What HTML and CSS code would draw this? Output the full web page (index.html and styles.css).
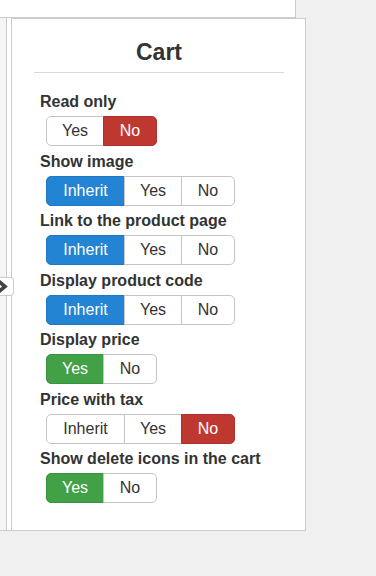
FILE: index.html
```html
<!DOCTYPE html>
<html lang="en">
  <head>
    <meta charset="UTF-8" />
    <meta name="viewport" content="width=device-width, initial-scale=1.0" />
    <title>Cart</title>
    <link rel="stylesheet" href="styles.css">
  </head>
  <body>
    <div class="top"></div>
    <div class="layout">
      <div class="side"></div>
      <div class="spacer"></div>
      <div class="panel">
        <h3 class="title">Cart</h3>
        <div class="field">
          <div class="label">Read only</div>
          <div class="group">
            <span class="btn yes">Yes</span>
            <span class="btn no danger">No</span>
          </div>
        </div>
        <div class="field">
          <div class="label">Show image</div>
          <div class="group">
            <span class="btn inherit primary">Inherit</span>
            <span class="btn yes">Yes</span>
            <span class="btn no">No</span>
          </div>
        </div>
        <div class="field">
          <div class="label">Link to the product page</div>
          <div class="group">
            <span class="btn inherit primary">Inherit</span>
            <span class="btn yes">Yes</span>
            <span class="btn no">No</span>
          </div>
        </div>
        <div class="field">
          <div class="label">Display product code</div>
          <div class="group">
            <span class="btn inherit primary">Inherit</span>
            <span class="btn yes">Yes</span>
            <span class="btn no">No</span>
          </div>
        </div>
        <div class="field">
          <div class="label">Display price</div>
          <div class="group">
            <span class="btn yes success">Yes</span>
            <span class="btn no">No</span>
          </div>
        </div>
        <div class="field">
          <div class="label">Price with tax</div>
          <div class="group">
            <span class="btn inherit">Inherit</span>
            <span class="btn yes">Yes</span>
            <span class="btn no danger">No</span>
          </div>
        </div>
        <div class="field">
          <div class="label">Show delete icons in the cart</div>
          <div class="group">
            <span class="btn yes success">Yes</span>
            <span class="btn no">No</span>
          </div>
        </div>
      </div>
    </div>
    <div class="tab">
      <svg width="9" height="13" viewBox="0 0 9 13">
        <polyline points="-1,1.5 5,6.5 -1,11.5" fill="none" stroke="#444" stroke-width="3.6" />
      </svg>
    </div>
  </body>
</html>
```

FILE: styles.css
```css
* {
  padding: 0;
  margin: 0;
  box-sizing: border-box;
}
body {
  background-color: #f0f0f0;
  font-family: "Liberation Sans", Arial, sans-serif;
  color: #333;
}
.top {
  width: 296px;
  height: 18px;
  background-color: #fff;
  border-right: 1px solid #ccc;
  border-bottom: 1px solid #ccc;
}
.layout {
  display: flex;
  height: 513px;
}
.side {
  width: 7px;
  background-color: #f5f5f5;
  border-right: 1px solid #ccc;
  border-bottom: 1px solid #ccc;
}
.spacer {
  width: 4px;
  background-color: #fff;
  border-bottom: 1px solid #ccc;
}
.panel {
  width: 295px;
  background-color: #fff;
  border: 1px solid #ccc;
  padding: 20px 21px 0 22px;
}
.title {
  font-size: 23px;
  line-height: 26px;
  font-weight: bold;
  text-align: center;
  padding-bottom: 7px;
  border-bottom: 1px solid #d8d8d8;
  margin-bottom: 19px;
}
.field {
  padding-bottom: 5.5px;
}
.label {
  font-size: 16px;
  font-weight: bold;
  line-height: 20px;
  margin-left: 6px;
}
.group {
  display: flex;
  margin: 4px 0 0 12px;
}
.btn {
  height: 30px;
  line-height: 28px;
  font-size: 16px;
  text-align: center;
  background-color: #fff;
  border: 1px solid #c4c4c4;
  color: #333;
}
.btn + .btn {
  margin-left: -1px;
}
.btn:first-child {
  border-radius: 5px 0 0 5px;
}
.btn:last-child {
  border-radius: 0 5px 5px 0;
}
.inherit {
  width: 79px;
}
.yes {
  width: 58px;
}
.no {
  width: 54px;
}
.primary {
  background-color: #2384d3;
  border-color: #1f78c1;
  color: #fff;
}
.success {
  background-color: #42a047;
  border-color: #3a913f;
  color: #fff;
}
.danger {
  background-color: #bf3830;
  border-color: #ad322b;
  color: #fff;
}
.tab {
  position: absolute;
  left: 0;
  top: 277px;
  width: 14px;
  height: 19px;
  background-color: #fff;
  border: 1px solid #ccc;
  border-left: none;
  border-radius: 0 4px 4px 0;
  display: flex;
  align-items: center;
}
```
